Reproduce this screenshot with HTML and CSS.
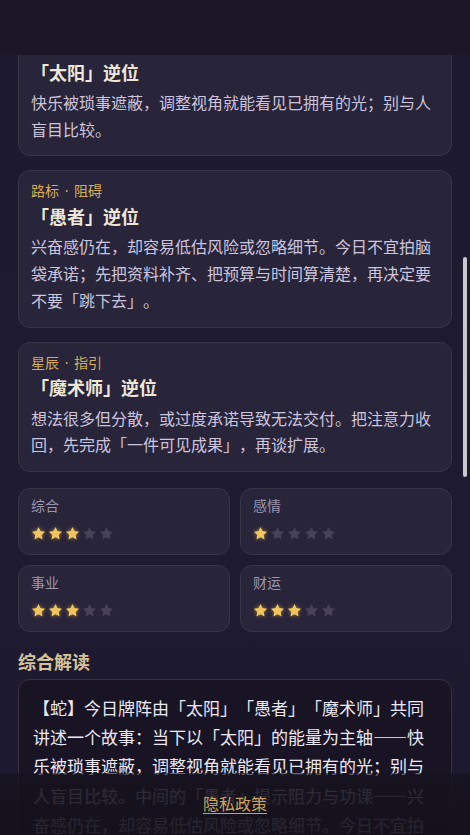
FILE: index.html
```html
<!DOCTYPE html>
<html lang="zh-CN">
<head>
<meta charset="utf-8">
<title>塔罗解读</title>
<link rel="stylesheet" href="styles.css">
</head>
<body>
<div class="app">
  <header class="topbar"></header>
  <main class="scroller" id="scroller">
    <div class="content">
      <section class="card">
        <div class="card-label">光源 · 现状</div>
        <h3 class="card-title">「太阳」逆位</h3>
        <p class="card-text">快乐被琐事遮蔽，调整视角就能看见已拥有的光；别与人盲目比较。</p>
      </section>
      <section class="card">
        <div class="card-label">路标 · 阻碍</div>
        <h3 class="card-title">「愚者」逆位</h3>
        <p class="card-text">兴奋感仍在，却容易低估风险或忽略细节。今日不宜拍脑袋承诺；先把资料补齐、把预算与时间算清楚，再决定要不要「跳下去」。</p>
      </section>
      <section class="card">
        <div class="card-label">星辰 · 指引</div>
        <h3 class="card-title">「魔术师」逆位</h3>
        <p class="card-text">想法很多但分散，或过度承诺导致无法交付。把注意力收回，先完成「一件可见成果」，再谈扩展。</p>
      </section>

      <div class="stats">
        <div class="stat">
          <div class="stat-label">综合</div>
          <div class="stars">
            <svg class="star on" viewBox="0 0 24 24"><path d="M12 1.5l3.2 6.6 7.3 1-5.3 5.1 1.3 7.2L12 18l-6.5 3.4 1.3-7.2L1.5 9.1l7.3-1z"/></svg>
            <svg class="star on" viewBox="0 0 24 24"><path d="M12 1.5l3.2 6.6 7.3 1-5.3 5.1 1.3 7.2L12 18l-6.5 3.4 1.3-7.2L1.5 9.1l7.3-1z"/></svg>
            <svg class="star on" viewBox="0 0 24 24"><path d="M12 1.5l3.2 6.6 7.3 1-5.3 5.1 1.3 7.2L12 18l-6.5 3.4 1.3-7.2L1.5 9.1l7.3-1z"/></svg>
            <svg class="star" viewBox="0 0 24 24"><path d="M12 1.5l3.2 6.6 7.3 1-5.3 5.1 1.3 7.2L12 18l-6.5 3.4 1.3-7.2L1.5 9.1l7.3-1z"/></svg>
            <svg class="star" viewBox="0 0 24 24"><path d="M12 1.5l3.2 6.6 7.3 1-5.3 5.1 1.3 7.2L12 18l-6.5 3.4 1.3-7.2L1.5 9.1l7.3-1z"/></svg>
          </div>
        </div>
        <div class="stat">
          <div class="stat-label">感情</div>
          <div class="stars">
            <svg class="star on" viewBox="0 0 24 24"><path d="M12 1.5l3.2 6.6 7.3 1-5.3 5.1 1.3 7.2L12 18l-6.5 3.4 1.3-7.2L1.5 9.1l7.3-1z"/></svg>
            <svg class="star" viewBox="0 0 24 24"><path d="M12 1.5l3.2 6.6 7.3 1-5.3 5.1 1.3 7.2L12 18l-6.5 3.4 1.3-7.2L1.5 9.1l7.3-1z"/></svg>
            <svg class="star" viewBox="0 0 24 24"><path d="M12 1.5l3.2 6.6 7.3 1-5.3 5.1 1.3 7.2L12 18l-6.5 3.4 1.3-7.2L1.5 9.1l7.3-1z"/></svg>
            <svg class="star" viewBox="0 0 24 24"><path d="M12 1.5l3.2 6.6 7.3 1-5.3 5.1 1.3 7.2L12 18l-6.5 3.4 1.3-7.2L1.5 9.1l7.3-1z"/></svg>
            <svg class="star" viewBox="0 0 24 24"><path d="M12 1.5l3.2 6.6 7.3 1-5.3 5.1 1.3 7.2L12 18l-6.5 3.4 1.3-7.2L1.5 9.1l7.3-1z"/></svg>
          </div>
        </div>
        <div class="stat">
          <div class="stat-label">事业</div>
          <div class="stars">
            <svg class="star on" viewBox="0 0 24 24"><path d="M12 1.5l3.2 6.6 7.3 1-5.3 5.1 1.3 7.2L12 18l-6.5 3.4 1.3-7.2L1.5 9.1l7.3-1z"/></svg>
            <svg class="star on" viewBox="0 0 24 24"><path d="M12 1.5l3.2 6.6 7.3 1-5.3 5.1 1.3 7.2L12 18l-6.5 3.4 1.3-7.2L1.5 9.1l7.3-1z"/></svg>
            <svg class="star on" viewBox="0 0 24 24"><path d="M12 1.5l3.2 6.6 7.3 1-5.3 5.1 1.3 7.2L12 18l-6.5 3.4 1.3-7.2L1.5 9.1l7.3-1z"/></svg>
            <svg class="star" viewBox="0 0 24 24"><path d="M12 1.5l3.2 6.6 7.3 1-5.3 5.1 1.3 7.2L12 18l-6.5 3.4 1.3-7.2L1.5 9.1l7.3-1z"/></svg>
            <svg class="star" viewBox="0 0 24 24"><path d="M12 1.5l3.2 6.6 7.3 1-5.3 5.1 1.3 7.2L12 18l-6.5 3.4 1.3-7.2L1.5 9.1l7.3-1z"/></svg>
          </div>
        </div>
        <div class="stat">
          <div class="stat-label">财运</div>
          <div class="stars">
            <svg class="star on" viewBox="0 0 24 24"><path d="M12 1.5l3.2 6.6 7.3 1-5.3 5.1 1.3 7.2L12 18l-6.5 3.4 1.3-7.2L1.5 9.1l7.3-1z"/></svg>
            <svg class="star on" viewBox="0 0 24 24"><path d="M12 1.5l3.2 6.6 7.3 1-5.3 5.1 1.3 7.2L12 18l-6.5 3.4 1.3-7.2L1.5 9.1l7.3-1z"/></svg>
            <svg class="star on" viewBox="0 0 24 24"><path d="M12 1.5l3.2 6.6 7.3 1-5.3 5.1 1.3 7.2L12 18l-6.5 3.4 1.3-7.2L1.5 9.1l7.3-1z"/></svg>
            <svg class="star" viewBox="0 0 24 24"><path d="M12 1.5l3.2 6.6 7.3 1-5.3 5.1 1.3 7.2L12 18l-6.5 3.4 1.3-7.2L1.5 9.1l7.3-1z"/></svg>
            <svg class="star" viewBox="0 0 24 24"><path d="M12 1.5l3.2 6.6 7.3 1-5.3 5.1 1.3 7.2L12 18l-6.5 3.4 1.3-7.2L1.5 9.1l7.3-1z"/></svg>
          </div>
        </div>
      </div>

      <h2 class="section-title">综合解读</h2>
      <section class="reading">
        <p>【蛇】今日牌阵由「太阳」「愚者」「魔术师」共同讲述一个故事：当下以「太阳」的能量为主轴——快乐被琐事遮蔽，调整视角就能看见已拥有的光；别与人盲目比较。中间的「愚者」提示阻力与功课——兴奋感仍在，却容易低估风险或忽略细节。今日不宜拍脑袋承诺；先把资料补齐、把预算与时间算清楚，再决定要不要「跳下去」。最后的「魔术师」给出指引——把注意力收回，先完成「一件可见成果」，再谈扩展。</p>
      </section>
    </div>
  </main>
  <div class="scroll-thumb"></div>
  <footer class="footer">
    <a class="footer-link" href="#">隐私政策</a>
  </footer>
</div>
<script src="script.js"></script>
</body>
</html>
```

FILE: styles.css
```css
* { box-sizing: border-box; }

html, body {
  margin: 0;
  padding: 0;
  background: #1d192d;
}

body {
  font-family: "Noto Sans CJK SC", "Noto Sans", sans-serif;
  color: #cbc4dc;
  text-spacing-trim: space-all;
}

.app {
  position: relative;
  width: 470px;
  height: 835px;
  display: flex;
  flex-direction: column;
  overflow: hidden;
  background: linear-gradient(180deg, #1d1930 0%, #1e1a2f 60%, #1d1930 100%);
}

.topbar {
  flex: none;
  height: 55px;
  background: #1b1727;
}

.scroller {
  flex: 1;
  overflow: hidden;
}

.content {
  padding: 0 18px 120px;
  display: flex;
  flex-direction: column;
}

.card {
  background: #28243a;
  border: 1px solid #3a3447;
  border-radius: 12px;
  padding: 12px 12px 13px;
  margin-bottom: 14px;
}

.card-label {
  font-family: "Noto Sans", "Noto Sans CJK SC", sans-serif;
  font-size: 14px;
  line-height: 16.8px;
  word-spacing: 2px;
  color: #d6ad55;
}

.card-title {
  margin: 4px 0 0;
  font-size: 18px;
  line-height: 25.2px;
  font-weight: 700;
  color: #eee6d6;
}

.card-text {
  margin: 4px 0 0;
  font-size: 16px;
  line-height: 26.7px;
  color: #cdc5de;
}

.stats {
  margin-top: 2px;
  display: grid;
  grid-template-columns: 1fr 1fr;
  gap: 10px;
}

.stat {
  background: #28243a;
  border: 1px solid #3a3447;
  border-radius: 12px;
  padding: 8px 12px 10px;
}

.stat-label {
  font-size: 14px;
  line-height: 16.8px;
  color: #9d96ad;
}

.stars {
  margin-top: 10px;
  height: 20px;
  display: flex;
  align-items: center;
  gap: 2px;
}

.star {
  width: 15px;
  height: 15px;
  fill: #474257;
}

.star.on {
  fill: #f2c55c;
  filter: drop-shadow(0 0 2px rgba(242, 190, 80, 0.55));
}

.section-title {
  margin: 17px 0 5px;
  font-size: 18px;
  line-height: 25.2px;
  font-weight: 700;
  color: #d6c39a;
}

.reading {
  background: #181424;
  border: 1px solid #3a3040;
  border-radius: 12px;
  padding: 13px 14px 14px;
}

.reading p {
  margin: 0;
  font-size: 17px;
  line-height: 29.3px;
  color: #ece8f3;
}

.scroll-thumb {
  position: absolute;
  top: 257px;
  right: 3px;
  width: 4px;
  height: 220px;
  border-radius: 2px;
  background: #c9c8cc;
}

.footer {
  position: absolute;
  left: 0;
  right: 0;
  bottom: 0;
  height: 62px;
  display: flex;
  align-items: center;
  justify-content: center;
  padding-bottom: 2px;
  background: linear-gradient(180deg, rgba(21, 18, 29, 0.6) 0px, rgba(21, 18, 29, 0.88) 14px, rgba(20, 17, 27, 0.92) 100%);
}

.footer-link {
  font-size: 16px;
  line-height: 20px;
  color: #c9a45c;
  text-decoration: underline;
  text-underline-offset: 3px;
}
```

FILE: script.js
```js
document.getElementById('scroller').scrollTop = 29;
```
